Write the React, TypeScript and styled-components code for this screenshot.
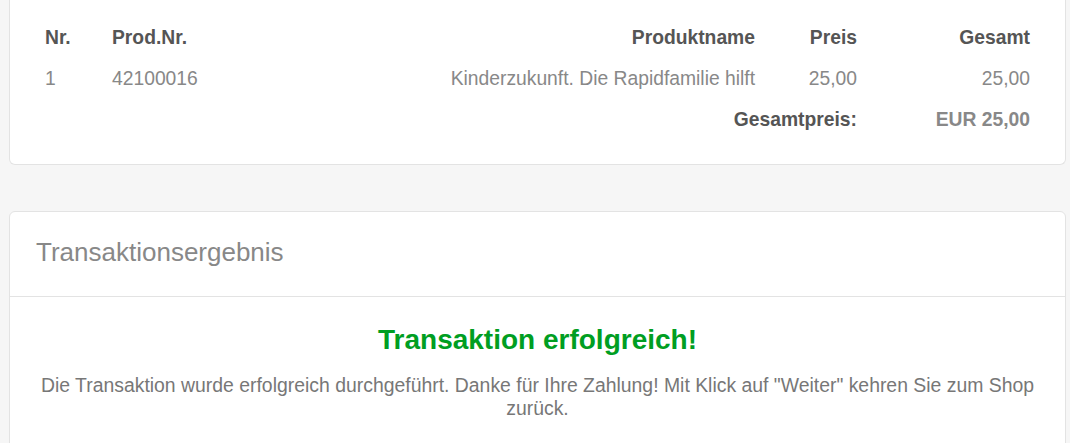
import React from "react";
import styled, { createGlobalStyle } from "styled-components";

const GlobalStyle = createGlobalStyle`
  html, body {
    margin: 0;
    padding: 0;
    background: #f6f6f6;
    font-family: "Liberation Sans", Arial, sans-serif;
  }
`;

const Page = styled.div`
  padding: 0 4px 0 9px;
  display: flex;
  flex-direction: column;
  gap: 46px;
`;

const Card = styled.section<{ $cutTop?: boolean }>`
  background: #fff;
  border: 1px solid #e3e3e3;
  border-radius: 6px;
  ${(p) =>
    p.$cutTop &&
    `
    border-top: none;
    border-top-left-radius: 0;
    border-top-right-radius: 0;
  `}
`;

const CardBody = styled.div`
  padding: 17px 27px 24px;
`;

const Table = styled.table`
  width: 100%;
  border-collapse: collapse;
  table-layout: fixed;
  font-size: 19.3px;
`;

const HeadCell = styled.th<{ $align?: string }>`
  height: 41px;
  padding: 0 8px;
  box-sizing: border-box;
  font-weight: bold;
  color: #555;
  text-align: ${(p) => p.$align || "left"};
`;

const Cell = styled.td<{ $align?: string; $bold?: boolean; $dark?: boolean }>`
  height: 41px;
  padding: 0 8px;
  box-sizing: border-box;
  color: ${(p) => (p.$dark ? "#555" : "#888")};
  font-weight: ${(p) => (p.$bold ? "bold" : "normal")};
  text-align: ${(p) => p.$align || "left"};
  white-space: nowrap;
`;

const CardHeader = styled.header`
  padding: 26px 26px 29px;
  border-bottom: 1px solid #e3e3e3;
  font-size: 26px;
  line-height: 1.1;
  color: #888;
`;

const ResultBody = styled.div`
  padding: 28px 26px 40px;
  display: flex;
  flex-direction: column;
  align-items: center;
  gap: 19px;
  text-align: center;
`;

const SuccessTitle = styled.h2`
  margin: 0;
  font-size: 28px;
  line-height: 1.1;
  font-weight: bold;
  color: #009e22;
`;

const Message = styled.p`
  margin: 0;
  font-size: 19.4px;
  line-height: 23px;
  color: #777;
`;

export default function App() {
  return (
    <>
      <GlobalStyle />
      <Page>
        <Card $cutTop>
          <CardBody>
            <Table>
              <colgroup>
                <col style={{ width: 67 }} />
                <col style={{ width: 200 }} />
                <col />
                <col style={{ width: 102 }} />
                <col style={{ width: 173 }} />
              </colgroup>
              <thead>
                <tr>
                  <HeadCell>Nr.</HeadCell>
                  <HeadCell>Prod.Nr.</HeadCell>
                  <HeadCell $align="right">Produktname</HeadCell>
                  <HeadCell $align="right">Preis</HeadCell>
                  <HeadCell $align="right">Gesamt</HeadCell>
                </tr>
              </thead>
              <tbody>
                <tr>
                  <Cell>1</Cell>
                  <Cell>42100016</Cell>
                  <Cell $align="right">Kinderzukunft. Die Rapidfamilie hilft</Cell>
                  <Cell $align="right">25,00</Cell>
                  <Cell $align="right">25,00</Cell>
                </tr>
                <tr>
                  <Cell colSpan={4} $align="right" $bold $dark>
                    Gesamtpreis:
                  </Cell>
                  <Cell $align="right" $bold>
                    EUR 25,00
                  </Cell>
                </tr>
              </tbody>
            </Table>
          </CardBody>
        </Card>
        <Card>
          <CardHeader>Transaktionsergebnis</CardHeader>
          <ResultBody>
            <SuccessTitle>Transaktion erfolgreich!</SuccessTitle>
            <Message>
              Die Transaktion wurde erfolgreich durchgeführt. Danke für Ihre
              Zahlung! Mit Klick auf "Weiter" kehren Sie zum Shop zurück.
            </Message>
          </ResultBody>
        </Card>
      </Page>
    </>
  );
}
